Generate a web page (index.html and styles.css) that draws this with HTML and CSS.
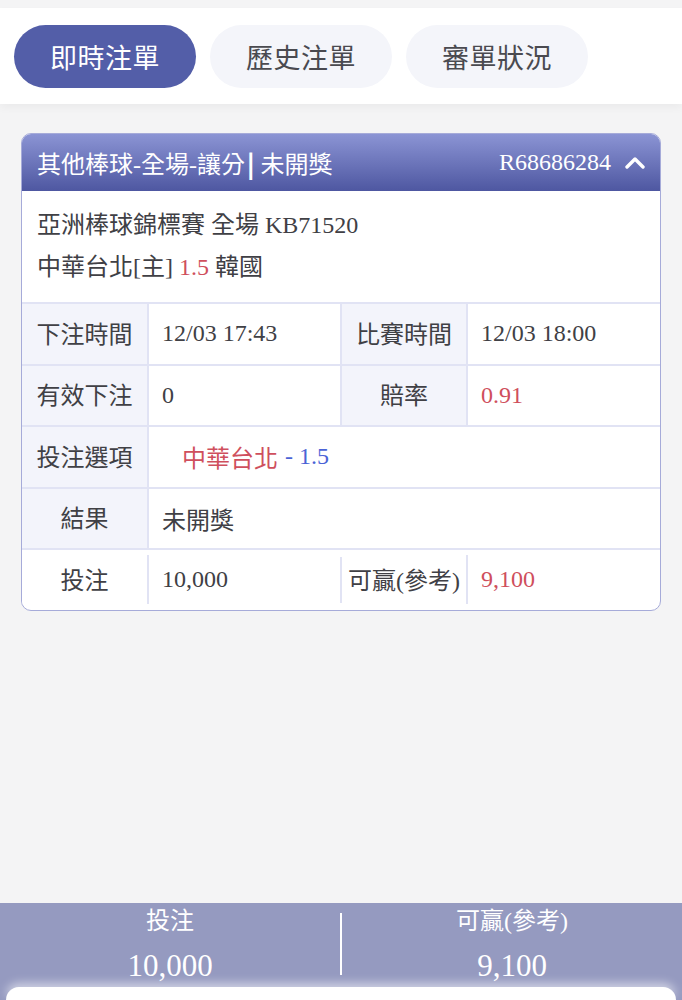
FILE: index.html
```html
<!DOCTYPE html>
<html lang="zh-Hant">
<head>
  <meta charset="UTF-8">
  <meta name="viewport" content="width=device-width, initial-scale=1">
  <title>即時注單</title>
  <link rel="stylesheet" href="styles.css">
</head>
<body>

<!-- Tabs -->
<div class="tabs">
  <div class="tab active">即時注單</div>
  <div class="tab">歷史注單</div>
  <div class="tab">審單狀況</div>
</div>

<div class="main">
  <div class="card">
    <div class="card-head">
      <div class="title">其他棒球-全場-讓分<b class="sep">|</b> 未開獎</div>
      <div class="order">
        R68686284
        <svg class="caret" width="22" height="14" viewBox="0 0 22 14"><path d="M3 12 L11 4 L19 12" fill="none" stroke="#fff" stroke-width="3.4" stroke-linecap="round" stroke-linejoin="round"/></svg>
      </div>
    </div>
    <div class="match">
      <div>亞洲棒球錦標賽 全場 KB71520</div>
      <div>中華台北[主] <span class="red">1.5</span> 韓國</div>
    </div>
    <div class="row">
      <div class="lbl">下注時間</div>
      <div class="val">12/03 17:43</div>
      <div class="lbl">比賽時間</div>
      <div class="val">12/03 18:00</div>
    </div>
    <div class="row">
      <div class="lbl">有效下注</div>
      <div class="val">0</div>
      <div class="lbl">賠率</div>
      <div class="val red">0.91</div>
    </div>
    <div class="row">
      <div class="lbl">投注選項</div>
      <div class="val wide pick"><span class="red">中華台北</span><span class="blue line">- 1.5</span></div>
    </div>
    <div class="row">
      <div class="lbl">結果</div>
      <div class="val wide">未開獎</div>
    </div>
    <div class="row total">
      <div class="lbl">投注</div>
      <div class="val">10,000</div>
      <div class="lbl">可贏(參考)</div>
      <div class="val red">9,100</div>
    </div>
  </div>
</div>

<!-- Summary bar -->
<div class="summary">
  <div class="sum-cols">
    <div class="sum-col">
      <div class="sum-lbl">投注</div>
      <div class="sum-val">10,000</div>
    </div>
    <div class="sum-divider"></div>
    <div class="sum-col">
      <div class="sum-lbl">可贏(參考)</div>
      <div class="sum-val">9,100</div>
    </div>
  </div>
  <div class="sheet"></div>
</div>

</body>
</html>
```

FILE: styles.css
```css
html, body {
  height: 100%;
}
body {
  margin: 0;
  font-family: "Liberation Serif", "Noto Sans CJK TC", serif;
  background: #f4f4f5;
  color: #404045;
  display: flex;
  flex-direction: column;
  overflow: hidden;
}
.tabs {
  margin-top: 8px;
  background: #ffffff;
  padding: 17px 14px 16px 14px;
  display: flex;
  gap: 14px;
  box-shadow: 0 4px 8px rgba(0,0,0,0.04);
}
.tab {
  width: 182px;
  height: 63px;
  border-radius: 32px;
  background: #f4f5fa;
  color: #4a4a50;
  font-family: "Noto Sans CJK TC", sans-serif;
  font-size: 27px;
  display: flex;
  align-items: center;
  justify-content: center;
  letter-spacing: 0.5px;
}
.tab.active {
  background: #535ea8;
  color: #ffffff;
}
.main {
  flex: 1;
  padding: 29px 21px 0 21px;
}
.card {
  border: 1.5px solid #a6abd9;
  border-radius: 10px;
  background: #ffffff;
  overflow: hidden;
  font-size: 24px;
}
.card-head {
  height: 57px;
  background: linear-gradient(#8b94d4, #4e57a1);
  color: #ffffff;
  display: flex;
  align-items: center;
  justify-content: space-between;
  padding: 0 14px 0 15px;
}
.sep {
  font-family: "Noto Sans CJK TC", sans-serif;
  font-weight: 900;
  margin-left: 2px;
}
.order {
  display: flex;
  align-items: center;
  gap: 13px;
}
.caret {
  margin-top: -2px;
}
.match {
  padding: 13px 15px 14px 15px;
  line-height: 42px;
}
.row {
  display: grid;
  grid-template-columns: 127px 193px 126px 1fr;
  height: 59.5px;
  border-top: 2px solid #e1e3f4;
  align-items: stretch;
}
.lbl {
  background: #f3f4fb;
  border-right: 2px solid #e1e3f4;
  display: flex;
  align-items: center;
  justify-content: center;
  white-space: nowrap;
  padding-bottom: 3px;
}
.val {
  padding-left: 13px;
  display: flex;
  align-items: center;
  border-right: 2px solid #e1e3f4;
  white-space: nowrap;
}
.val:last-child {
  border-right: none;
}
.val.wide {
  grid-column: 2 / 5;
}
.val.pick {
  padding-left: 33px;
}
.line {
  margin-left: 7px;
}
.row.total {
  align-items: center;
}
.row.total .lbl {
  background: #ffffff;
  height: 46px;
}
.row.total .val {
  height: 46px;
}
.red {
  color: #cf4f5d;
}
.blue {
  color: #4b63d6;
}
.summary {
  background: #959ac0;
  color: #ffffff;
}
.sum-cols {
  display: flex;
  align-items: flex-start;
  height: 84px;
}
.sum-col {
  flex: 1;
  text-align: center;
  padding-top: 3px;
}
.sum-lbl {
  font-size: 24px;
  line-height: 30px;
}
.sum-val {
  font-size: 31px;
  line-height: 60px;
}
.sum-divider {
  width: 2px;
  height: 62px;
  margin-top: 10px;
  background: #ffffff;
}
.sheet {
  height: 13px;
  margin: 0 6px;
  background: #ffffff;
  border-radius: 24px 24px 0 0;
  box-shadow: 0 -4px 10px rgba(255,255,255,0.55);
}
```
